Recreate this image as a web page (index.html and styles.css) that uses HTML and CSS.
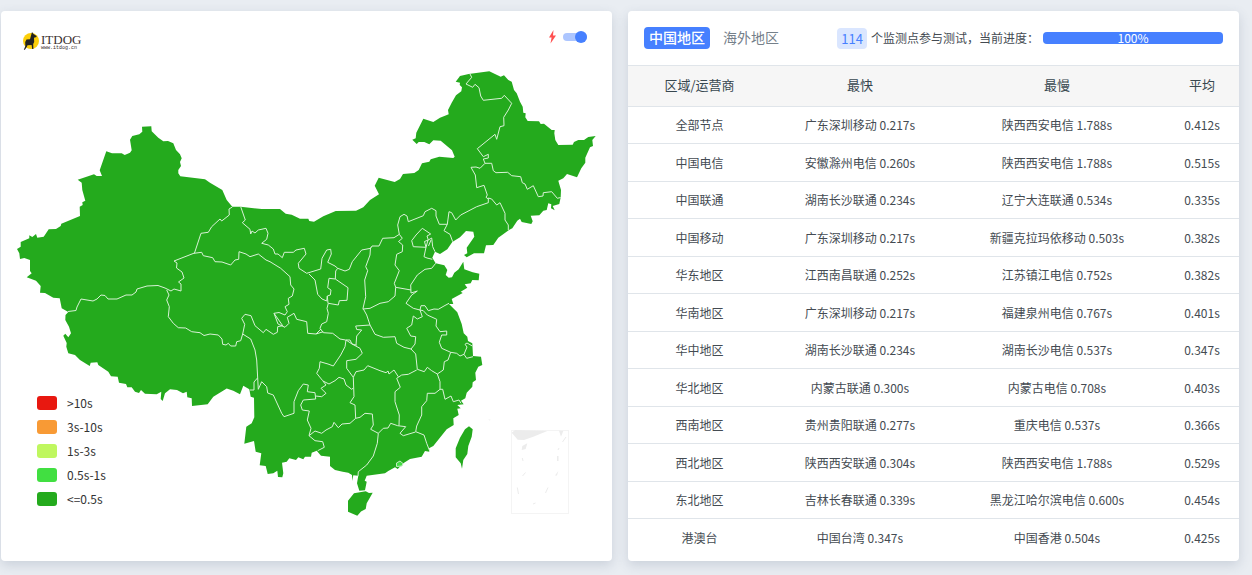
FILE: index.html
```
<!DOCTYPE html>
<html lang="zh-CN">
<head>
    <meta charset="UTF-8">
    <meta name="viewport" content="width=device-width, initial-scale=1.0">
    <title>ITDOG</title>
    <link rel="stylesheet" href="styles.css">
</head>
<body>
    <main class="panels">
        <section class="card map-card">
            <div class="map-header">
                <svg class="logo" width="60" height="20" viewBox="0 0 60 20" role="img" aria-label="ITDOG">
                    <circle cx="8" cy="10" r="8" fill="#fccf0a"/>
                    <path d="M9 1l1.5 2 3 2v1l-2.500.8.2 4.200-1 2 .2 5H9.200l-.6-4-4.100.2-.6 1.500-2 3H.8l1.500-3.500-.1-4.200L3.500 8.500 7 8.300z" fill="#222"/>
                    <text class="logo-name" x="18" y="13">ITDOG</text>
                    <text class="logo-url" x="18" y="18">www.itdog.cn</text>
                </svg>
                <label class="fast-switch">
                    <svg width="9" height="14" viewBox="0 0 9 14" aria-hidden="true">
                        <path d="M5.500 0L1 7.500h2.600L2.500 13.500 8 5.500H5z" fill="#ff5050"/>
                    </svg>
                    <input type="checkbox" class="switch" aria-label="快速模式" checked>
                </label>
            </div>

            <svg class="map" viewBox="1 61 611 500" role="img" aria-label="中国地图">
                <!-- Mainland -->
                <path class="land" d="M17 249L20.700 246.700 20.700 242 29.300 238.300 29.300 235.300 32.300 237 36 234 37.300 237.700 43.700 236.700 48.700 229.300 56 229 60.700 226 61.300 223.700 80 216 79.700 206.700 82.700 205 82.300 202.300 85.300 200.700 82.300 190 81.700 182.700 77.700 179.700 94 174.300 96.700 176 102 176 99.700 170.300 106.300 151.300 112 153.300 121.700 153.300 124.700 155 130 152.700 131.700 150.300 130 139.700 132.300 136 139.300 134.300 142.300 131.700 142 126.700 151.300 126.300 151.700 131.300 158.300 137.700 163.300 141.300 168 141 173.300 143.300 176 150 180 154.300 181.700 158.300 180 162 181 166 178.300 170 178.300 173.300 180.300 176.300 205 179.300 210 182.700 222.300 190 226.700 200 232.300 206.700 240.700 206.700 261.700 209 280 209 285.700 213.700 291.700 214.700 300 218.700 308.300 218.700 309.300 221 314 221.700 323.300 216.300 335.700 211 356 210.700 363.300 207.300 370 200 379 194.300 374.700 185.700 378.700 177.700 394.700 182 400 179 403 174 414.300 173 418.700 170 422 163.300 429.300 161.700 430.700 159.300 439.300 156.700 453.300 158 454.700 156.700 452 150.300 440.700 140.700 433.300 140.300 429.300 144.300 424.300 142 418.700 142 416.700 144 412.300 139.700 415.700 138.300 416.300 132.700 423.300 118.700 433.300 122 440 117.700 448.700 114.300 448 110 451.700 102.700 456 95.300 461.300 91.300 462 87.300 459.700 85 460 82.700 455.700 81.700 460 76 468.700 74 489.300 71.300 500.700 76.700 504 75.300 508.300 80 511.700 81.700 514 90 516.700 93.300 520 101.700 522.700 106.700 523.300 112.700 525.700 113.300 525.300 117.300 527.700 121 539 121.300 540.700 124 544 123.700 551.700 130 554.700 130 554.300 133.300 555.300 140 558.300 145 572.700 144.700 574 142 578.300 140 584 140 588.300 137 595.700 136 592.300 140 593 146 590 147.300 585.300 157.700 585.300 162.700 581.300 168.300 577 177.300 567 174 563.300 178.300 558.300 180.700 561 190 560.700 197.300 559.300 204 552.700 206 554.700 210.300 551 208.300 551.300 204.300 548.300 203.300 546.700 210 543.300 210.700 539.300 215.300 530.700 215.700 532.700 221.300 531.300 224 521.700 222 520 218.700 517.300 220.700 512.300 228.300 509 230 498.300 237.700 493.300 245 486 245.300 484 253.300 474 253.300 466.700 257.300 464 255 467.300 253.300 466.700 247.700 474.300 236.700 473.300 231.700 466 231 460 237.300 452.300 242 447.300 249.300 440 254 435 251.700 432.300 257.700 435.700 263.300 444.300 265.300 447.300 270 445.700 275 448.700 277.700 452 277.300 454.300 272.700 458.700 269.300 463.300 261.700 464.300 269.300 472.700 272.300 479.300 273.700 478.700 280.300 472.300 280 470.700 283.300 464.700 284.300 467.300 287.700 460.700 291.700 462.700 293 451.700 299 453.300 304 449 304 457.300 312.300 461.700 324 463.700 333.300 467.300 336.700 468 341 472.300 343.300 473 356 481 356.700 482.300 365 478.300 366.700 475.300 372.700 476 380 472.700 382.300 472.300 386.700 466.700 392.700 465.300 398.300 461 400.700 463.700 404.300 457.300 405 460.700 408.300 457.300 408.700 458.700 415 453.300 418.300 453.700 425 446.700 429.300 433.300 446 429 448.300 429.300 451.700 425 451 421.700 456.700 410 459 403.300 463.300 397.700 469 395 467.300 388.300 471 385 473.300 366.700 475.700 364.700 480.700 366.700 481.700 365 490.300 359.300 490.700 357 483.300 358.300 475.700 353.300 475.300 352.300 481 352 475 348.300 472.700 342.700 471.700 335 470 330 466 330 456.700 321 455.700 316.700 450.700 311.700 452.700 311 456.700 305 456.700 303.300 459.300 298.300 457.300 296 460 289.300 458.300 286.700 461.700 282 462.700 283.300 473.300 282.300 477.300 278 477 277.300 470.700 273.300 473.300 267.700 474 265.700 466 259.700 465.300 261.300 453.300 255.700 451.700 254 441 244.300 443.700 246.300 426.700 251.700 423.300 254.300 417.300 254 397.700 250.700 396.700 249.300 389.300 243.300 385.700 240 394.300 233.300 390.700 226.700 388.500 213.300 396.700 207.700 404.300 192 406 191.700 398.300 187.300 397.300 186.700 391.700 183 393.300 177 390 170 389.300 165 393.300 162.700 401 160.700 399 161.300 391.700 156.700 394.300 145 393.700 141 390 139 393 135 391.700 131.700 387.300 127.300 387.300 126 384 119 382.700 117.700 376.700 111 376.300 108.300 371.700 98.300 365 97.300 362.300 90.700 362.700 89.700 366 80 360 75 355 68.300 353.300 66.300 346.700 66.700 343 63.300 335.700 65.300 333.700 68.300 337.300 71 333.300 69 326.700 65.300 320 65.500 315 68.300 312 61.700 308.300 59.700 298.300 53.300 297.700 45 293 40 292.700 40.700 286 36 280.700 26.700 277.300 31.700 273.300 30 271 30 260 24.300 258 20 259 19.300 253.300z"/>
                <!-- Hainan -->
                <path class="land" d="M365.700 491.300L369 493 372.700 492.700 366.700 503.300 365.700 509 361 511.500 357.300 515.700 348 511.700 348 500.700 354 493.300z"/>
                <!-- Taiwan -->
                <path class="land" d="M469 426.300L472.700 429.300 471.700 436.700 468.300 446 467.300 454 463.300 460 462 468.700 460.700 463.300 455.700 457.300 455.700 448.300 460 437.700 465 429.300z"/>

                <!-- North west and Tibet -->
                <g class="borders">
                    <path d="M68 311.500L76 310.500 77 307 81 299 93 301 97 299 101 295 105 295.500 108 299 117 299 126 295 132 295 136 292 137 289 147 286 158 285.500 165 288 171 291 174 289 181 291 181 284 178.500 282 184 278 182 272 176.500 268 177 263 174 261 194.500 253 201 233.300 208.300 232.300 211.700 226.700 220 219 221.700 221 229.300 215 229 209 232.300 207"/>
                    <path d="M240.700 206.700L245.300 220 242.300 222.700 250 229.300 250.700 234 252 231 255 233 258.300 230 266 228.300 268 233.300 266.700 239.300 261.700 243.300 268.300 245 273.300 249 275 254 278 254 282.300 257.700 284.300 252.300 293.300 252.300 296 250 304.300 248.300 306 254 298.300 263.300 299 268.300 306.700 273.300 320.700 269 322 258.300 326.700 250 330.700 249.300 331.300 254 327.700 262.300 335 266 337.700 268.300 335.700 271 335.300 279 329 278.300 327.700 287.700 331 290 330.300 295 327.300 296 326.700 301 322 299 317.700 294.300 315 280 309 274"/>
                    <path d="M335.300 279L348 287.700 347 300.300 339.300 300.700 338.300 305 328.300 303.300 327 308.300 328.300 313.300 326.700 321.700 321.700 324 320 328.300 323.300 332.700 332.700 333.300 340 339 345.700 340 350 340 352 344 356.700 345.300M327.300 296L328 303.300"/>
                    <path d="M337.700 268.300L345 271 349.300 269.300 352.300 261.700 361.700 250 370.700 248.300 372 246 379 246 382.700 238.300 394 237.700 399.300 234.300"/>
                    <path d="M370.500 247.500L370 255 365.700 266.700 367.700 270.700 364.700 280 365.700 296.700 363 308.300 366.700 315 370 325 355.700 326 356.700 329.500 361.700 330 356.700 336 356 345"/>
                    <path d="M166.700 290L169 295 166.700 300 169.300 306.700 168.300 316.700 173.300 323.300 178.300 327.700 185.700 328 191.700 331.700 200 332.700 204 335.500 210 334 218.300 335 222 339 222.700 344.300 226 345 228.300 343.300 230.700 346 235.700 346 236.700 341.700 240.700 340.700 242.700 334 244.700 324.300 241.700 318.300 245 314.300 251 315.700 255 325.700 263.300 332.700 266 329.300 273.300 334.300 277.300 332.300 277.700 326.700 282.700 325.700 274 313.300 279 312.500 285 315 287.300 311.700 285 306.700 289 304.300 288.300 298.300 292.300 296 294 289 290.700 285 290 276.700 280.700 268.300 270 261.700 266 260 258.300 254 250 256.700 246 254 239 251.700 238.700 259.300 235 260 230.700 265 222 262 215 261.700 212.700 257.700 203.300 255.700 201.700 252.300 194 253.300"/>
                    <path d="M274 313.300L278 324 285 327.300 289 323.300 287.300 317.300 294 313.300 296.700 319.300 306.700 321.700 307.700 333.300 316 334 323.300 331.700M316 334L321 329M242.700 334L250.700 339 255 350 256.700 360 258.300 389.300 261.700 381.700 266.700 386.700 267.700 393 273.300 395 281.700 413.300 284 416.700 294 413.300 294 401.700 298.300 390.700 303.300 384 308.300 385 307.300 391.700 315 392.700 315.700 399 303.300 400 300.700 405 302.300 410 309.300 411 307.300 420 311 428.300 309 435.700 315 440.700 322.700 441.700 324.300 447.300 317.700 450.700M257.500 378L254 382 254 390 250 390"/>
                </g>

                <!-- South and centre -->
                <g class="borders">
                    <path d="M309 435.700L315 431 321.700 433.300 326 430 332.300 426.700 334 422.300 338.300 427.700 342 424 350 423.300 355.700 418.300 360 417.300 365 413.300 372.300 414 373.300 425 370.700 429.300 378.300 433.300 377.300 443.300 373.300 456 366.700 465 358.300 471.700 358 476"/>
                    <path d="M378.300 433.300L383.300 428.300 388 428 390.700 423.300 397.700 425.700 405.700 426.700 400 433.300 403.300 435.700 415.500 432M399 425.500L399.300 415 397 408 395 401.700 395 391.700 400.300 387.300 396.700 378.300 401.700 375 408.300 374.300 416.700 370"/>
                    <path d="M346 340L345 346.700 340.700 355 333.300 366 328 364 320 361.700 319.300 368.300 316.700 373.300 322.700 380.700 326 385 321 388.300 326 393.300 321.700 396.700 315.500 396M323 381L329 384 335 380.700 339 377.300 344 379 346 385 351.700 389.300 353.300 388M346 340L352 344 360 348.300 362.300 353.300 356 359.300 346.700 360.700 346.700 368.300 353.300 377.300 354 396.700 350 402.700 355 405 355.700 418.300"/>
                    <path d="M353.300 377.300L356 371.700 364 370 367.700 365.700 380 370.700 386 372.700 388 371 389 374 394 370 398.300 376.700M370 325L375 334.300 383.300 337.300 395 336.700 396.700 343.300 404 347.300 411 349 415.700 354 417.300 369.300 424.300 371.700 427.300 367.300 431.700 370.700 437.300 374 443.300 370 444.300 361.700 448 360 450.700 352.300 456.700 353.300 460 356 464 354.300 466.700 358.300 473 356.700M464 354.300L467 347 465 344.300 467 343 472.300 346"/>
                    <path d="M450.700 352.300L441.700 348.300 439.300 342.300 441.700 335 446.700 335 446.700 331 440 331.700 436 326 436.700 319.300 427.300 315 423.300 310.700 420 310 422.300 316.700 417.300 319 413.300 316 411.700 325 406.700 328.300 410.700 336 415.700 336.700 415 344 411 349"/>
                    <path d="M437.300 374L440 381.700 440 389.300 442.700 389.300 445 399.300 451 396 453.300 401.700 459 400 461 403.300M440 389.300L435 393.300 427.300 393.300 426.700 400.700 421.700 406.700 421.700 415 416.700 426 415.700 431.700 424 435 426.700 443.300 429.300 450"/>
                </g>

                <!-- North -->
                <g class="borders">
                    <path d="M449 303.300L444 306 438.300 309.300 434 309 428.300 310.700 425 305.700 421 305.700 420 310 413.300 308.300 406 303.300 411.700 295 417.300 291 411 293 410.700 285 417.300 275 425 269.300 431.700 268.300 435.700 263.300M362.700 309L370 308.300 380 303.300 388.300 301.700 395 296 395.700 287.300 411 290"/>
                    <path d="M395.700 287.300L394.300 283.300 399.300 270.700 395 265 396.700 254.300 402.300 251.700 402.700 245 398.500 241.500 402.300 238.300 399.300 234.300 397.700 225 400 216.700 404 214.300 407 216 408.300 221.700 415 219 423.300 215.700 425 211.700 431.700 208.300 436 210.700 436 216 439.300 224.300 447.300 224.300 444 230.700 450 234.300 452.700 241.700"/>
                    <path d="M447.300 224.300L449 211.700 451.700 212.700 455.700 220 460.700 215 476.700 206.700 488.300 202.700 488.300 198 491.700 199 496.700 205 500 202.700 505 213.300 505 220 508.300 225 508.300 230"/>
                    <path d="M422.300 228.300L430.700 234 427 236 428.300 240 424.500 241.500 426 247.300 413.300 246.700 411.700 240.700 416 235zM428.300 240L431.700 238 432.700 246.700 435 251.700M428 240L426 247.300 424 256.700 427 258 432.300 259.300M431 240L428.500 246"/>
                    <path d="M470 74L471.700 77.300 466 84 472.700 87.300 475 84.300 479 87.700 480.700 96 483.300 100.300 501.700 98.300 504.300 95.300 511.700 103.300 508.300 110 503.700 117.300 504 125.700 500 126.700 496.700 139.300 495 134.300 477.300 148.700 483.300 156.700 488.300 154.300 488.300 158 483.300 159 485 163.300 480 168.300 476 167 471 167.300 475.300 175 476.700 187.700 484 185.300 487.300 195 486 197.300 488.300 199"/>
                    <path d="M485 163.300L491.700 163.300 493.300 170.700 496 172.700 507.700 172.300 511.700 175.700 520.700 176.700 522.300 182.700 525 184 527.300 189.300 533.300 185.700 538.300 196.700 543 196 543.300 192.700 551.700 191.700 557.300 198.300 560.700 197.500"/>
                </g>
                <path class="hongkong" d="M396.500 466.500L396.500 463 400 461 403 463.500 402 466z"/>

                <!-- South China Sea inset -->
                <rect class="inset-frame" x="511.500" y="430.500" width="57" height="83"/>
                <path class="inset-land" d="M511.700 432.700L515 430 547.300 431 533.300 436.700 524 440 517.700 439.700zM559 430.700L563.300 431 561 436.700zM522.300 446L527.300 443.300 525.700 449 521.700 450zM557 456H558.500V461H557zM558.300 471L555 475.500 557 475.500zM488 419.700L490.500 419.500 490 420.500z"/>
                <path class="inset-line" d="M566 437L562.500 442M559 448L558 450M548 487.500L545.500 493M517.300 487.500L518.500 494M525.500 472.500L522.500 476M522.300 458L523 461M533 504L535.500 503"/>
            </svg>

            <ul class="legend">
                <li><span class="swatch over-10"></span>&gt;10s</li>
                <li><span class="swatch from-3"></span>3s-10s</li>
                <li><span class="swatch from-1"></span>1s-3s</li>
                <li><span class="swatch from-half"></span>0.5s-1s</li>
                <li><span class="swatch fastest"></span>&lt;=0.5s</li>
            </ul>
        </section>

        <section class="card result-card">
            <div class="result-header">
                <div class="tabs">
                    <button type="button" class="tab active">中国地区</button>
                    <button type="button" class="tab">海外地区</button>
                </div>
                <div class="status">
                    <span class="count">114</span>
                    <span>个监测点参与测试，当前进度：</span>
                    <div class="progress" role="progressbar" aria-label="当前进度" aria-valuenow="100" aria-valuemin="0" aria-valuemax="100">
                        <div class="progress-bar" style="width: 100%">100%</div>
                    </div>
                </div>
            </div>

            <table class="results">
                <thead>
                    <tr><th class="col-region">区域/运营商</th><th class="col-fast">最快</th><th class="col-slow">最慢</th><th class="col-avg">平均</th></tr>
                </thead>
                <tbody>
                    <tr><td>全部节点</td><td>广东深圳移动 0.217s</td><td>陕西西安电信 1.788s</td><td>0.412s</td></tr>
                    <tr><td>中国电信</td><td>安徽滁州电信 0.260s</td><td>陕西西安电信 1.788s</td><td>0.515s</td></tr>
                    <tr><td>中国联通</td><td>湖南长沙联通 0.234s</td><td>辽宁大连联通 0.534s</td><td>0.335s</td></tr>
                    <tr><td>中国移动</td><td>广东深圳移动 0.217s</td><td>新疆克拉玛依移动 0.503s</td><td>0.382s</td></tr>
                    <tr><td>华东地区</td><td>江西南昌联通 0.252s</td><td>江苏镇江电信 0.752s</td><td>0.382s</td></tr>
                    <tr><td>华南地区</td><td>广东深圳移动 0.217s</td><td>福建泉州电信 0.767s</td><td>0.401s</td></tr>
                    <tr><td>华中地区</td><td>湖南长沙联通 0.234s</td><td>湖南长沙电信 0.537s</td><td>0.347s</td></tr>
                    <tr><td>华北地区</td><td>内蒙古联通 0.300s</td><td>内蒙古电信 0.708s</td><td>0.403s</td></tr>
                    <tr><td>西南地区</td><td>贵州贵阳联通 0.277s</td><td>重庆电信 0.537s</td><td>0.366s</td></tr>
                    <tr><td>西北地区</td><td>陕西西安联通 0.304s</td><td>陕西西安电信 1.788s</td><td>0.529s</td></tr>
                    <tr><td>东北地区</td><td>吉林长春联通 0.339s</td><td>黑龙江哈尔滨电信 0.600s</td><td>0.454s</td></tr>
                    <tr><td>港澳台</td><td>中国台湾 0.347s</td><td>中国香港 0.504s</td><td>0.425s</td></tr>
                </tbody>
            </table>
        </section>
    </main>
</body>
</html>
```
FILE: styles.css
```
/* General Styles */
* {
    box-sizing: border-box;
}

body {
    margin: 0;
    background-color: #e9edf2;
    color: #444b52;
    font-family: "Noto Sans CJK SC", sans-serif;
    font-size: 12px;
    line-height: 18px;
}

.panels {
    display: grid;
    grid-template-columns: 1fr 1fr;
    gap: 16px;
    padding: 11px 13px 14px 1px;
}

.card {
    background-color: #fff;
    border-radius: 4px;
    box-shadow: 0 4px 12px rgba(60, 80, 110, 0.18);
}

/* Map */
.map-card {
    position: relative;
}

.map-header {
    display: flex;
    justify-content: space-between;
    align-items: flex-start;
    height: 50px;
    padding: 19px 25px 0 22px;
}

.logo {
    margin-top: 1px;
}

.logo-name {
    font-family: "Liberation Serif", serif;
    font-size: 13px;
    fill: #3a3030;
}

.logo-url {
    font-family: "Liberation Mono", monospace;
    font-size: 5px;
    fill: #3a3030;
}

.fast-switch {
    display: flex;
    align-items: center;
    gap: 6px;
    cursor: pointer;
}

.switch {
    appearance: none;
    display: flex;
    align-items: center;
    justify-content: flex-end;
    width: 24px;
    height: 8px;
    margin: 0;
    border-radius: 4px;
    background-color: #adc6ff;
    cursor: pointer;
}

.switch::before {
    content: "";
    width: 12px;
    height: 12px;
    flex: none;
    border-radius: 50%;
    background-color: #4680ff;
}

.switch:not(:checked) {
    justify-content: flex-start;
}

.map {
    display: block;
    width: 100%;
}

.land {
    fill: #24aa1d;
}

.borders {
    fill: none;
    stroke: #d8f2d6;
    stroke-width: 1;
    stroke-linejoin: round;
}

.hongkong {
    fill: #41df41;
    stroke: #c5ecc3;
}

.inset-frame {
    fill: none;
    stroke: #f4f4f4;
}

.inset-land {
    fill: #ececec;
}

.inset-line {
    fill: none;
    stroke: #ececec;
}

/* Legend */
.legend {
    position: absolute;
    left: 36px;
    bottom: 55px;
    display: grid;
    gap: 10px;
    margin: 0;
    padding: 0;
    list-style: none;
    color: #333;
}

.legend li {
    display: flex;
    align-items: center;
    gap: 10px;
    line-height: 14px;
}

.swatch {
    width: 20px;
    height: 14px;
    border-radius: 3px;
}

.over-10 {
    background-color: #e81810;
}

.from-3 {
    background-color: #f89a35;
}

.from-1 {
    background-color: #bff75f;
}

.from-half {
    background-color: #41df41;
}

.fastest {
    background-color: #24aa1d;
}

/* Results */
.result-header {
    display: flex;
    justify-content: space-between;
    align-items: center;
    height: 54px;
    padding: 0 16px;
}

.tabs {
    display: flex;
    gap: 8px;
}

.tab {
    padding: 0 5px 2px;
    border: none;
    border-radius: 4px;
    background: none;
    color: #75808a;
    font-family: inherit;
    font-size: 14px;
    line-height: 20px;
    cursor: pointer;
}

.tab.active {
    background-color: #4680ff;
    color: #fff;
    font-weight: 500;
}

.status {
    display: flex;
    align-items: center;
    gap: 4px;
    white-space: nowrap;
}

.count {
    padding: 0 4px;
    border-radius: 4px;
    background-color: #dae6ff;
    color: #4680ff;
    font-size: 13px;
    line-height: 21px;
}

.progress {
    width: 180px;
    height: 12px;
    border-radius: 4px;
    background-color: #e9ecef;
}

.progress-bar {
    border-radius: 4px;
    background-color: #4680ff;
    color: #fff;
    line-height: 12px;
    text-align: center;
}

.results {
    width: 100%;
    table-layout: fixed;
    border-spacing: 0;
    text-align: center;
}

.results th {
    height: 41px;
    padding: 0 0 2px;
    border-top: 1px solid #e0e5ea;
    background-color: #f6f6f6;
    color: #37474f;
    font-size: 13px;
    font-weight: 400;
}

.results td {
    height: 37px;
    padding: 0;
    border-top: 1px solid #e0e5ea;
}

.results tr:nth-child(even) td {
    height: 38px;
}

/* Column widths share out the table width in proportion */
.results .col-region {
    width: 143px;
}

.results .col-fast {
    width: 178px;
}

.results .col-slow {
    width: 216px;
}

.results .col-avg {
    width: 74px;
}
```
